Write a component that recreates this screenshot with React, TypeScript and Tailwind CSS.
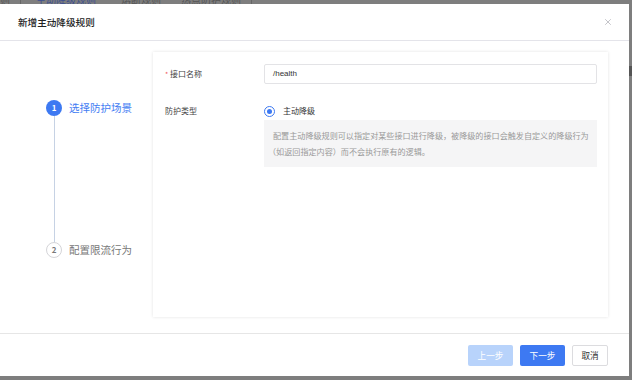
import { X } from 'lucide-react';

const font = { fontFamily: '"Noto Sans CJK SC", "Liberation Sans", sans-serif' };

const Steps = () => {
  return (
    <div className="w-[153px] shrink-0 pl-[46px] pt-[48px] flex flex-col">
      <div className="flex items-center gap-[7px]">
        <div className="w-4 h-4 rounded-full bg-[#3d79f2] text-white text-[8px] font-bold flex items-center justify-center">1</div>
        <span className="text-[10.5px] leading-none text-[#3f7cf3]">选择防护场景</span>
      </div>
      <div className="ml-[7.5px] w-px h-[126px] bg-[#c6d2e4]" />
      <div className="flex items-center gap-[7px]">
        <div className="w-4 h-4 rounded-full bg-white border border-[#d4d4d8] text-[#777] text-[8px] font-bold flex items-center justify-center">2</div>
        <span className="text-[10.5px] leading-none text-[#777]">配置限流行为</span>
      </div>
    </div>
  );
};

const FormCard = () => {
  return (
    <div className="flex-1 min-w-0 bg-white shadow-[0_0_3px_rgba(0,0,0,0.12)] pt-[12px] pl-[12px] pr-[11px]">
      {/* 接口名称 */}
      <div className="flex items-center h-[20px]">
        <div className="w-[99px] shrink-0 flex items-center text-[8px] text-[#444]">
          <span className="w-[5px] text-[#f05a5a] text-[7px]">*</span>
          <span>接口名称</span>
        </div>
        <div className="flex-1 h-[20px] border border-[#e3e3e6] rounded-[2px] flex items-center px-[8px] text-[8px] text-[#333]" style={{ fontFamily: '"Liberation Sans", sans-serif' }}>
          /health
        </div>
      </div>

      {/* 防护类型 */}
      <div className="flex mt-[20px]">
        <div className="w-[99px] shrink-0 h-[14px] flex items-center text-[8px] text-[#444]">防护类型</div>
        <div className="flex-1 min-w-0">
          <div className="h-[14px] flex items-center">
            <div className="w-[11px] h-[11px] rounded-full border border-[#3d79f2] flex items-center justify-center">
              <div className="w-[5px] h-[5px] rounded-full bg-[#3d79f2]" />
            </div>
            <span className="ml-[8px] text-[8px] text-[#333]">主动降级</span>
          </div>
          <div className="mt-[2px] h-[47px] bg-[#f5f5f6] pt-[8px] pl-[9px] text-[8.1px] leading-[16px] text-[#999] whitespace-nowrap overflow-hidden">
            配置主动降级规则可以指定对某些接口进行降级，被降级的接口会触发自定义的降级行为
            <br />
            <span className="ml-[-5px]">（如返回指定内容）而不会执行原有的逻辑。</span>
          </div>
        </div>
      </div>
    </div>
  );
};

export default function App() {
  return (
    <div className="relative w-[632px] h-[380px] overflow-hidden bg-[#7e7e7e]" style={font}>
      {/* page behind the mask */}
      <div className="flex items-end h-[4px] overflow-hidden text-[10px] leading-none text-[#555]">
        <div className="flex items-center h-[12px] -mb-[2px]">
          <span className="w-[20px]">则</span>
          <span className="w-px h-[12px] bg-[#666]" />
          <span className="ml-[15px] text-[#3d4f8f]">主动降级规则</span>
          <span className="ml-[25px]">熔断规则</span>
          <span className="ml-[20px]">热点防护规则</span>
          <span className="ml-[10px] w-px h-[12px] bg-[#666]" />
        </div>
      </div>
      <div className="absolute right-0 top-[66px] w-[3px] h-[10px] bg-[#555]" />

      {/* modal */}
      <div className="absolute left-0 top-[4px] w-[629px] h-[372px] bg-white flex flex-col">
        <div className="h-[37px] shrink-0 border-b border-[#e4e4ea] px-[18px] flex items-center justify-between">
          <span className="text-[9.6px] font-medium text-[#222]">新增主动降级规则</span>
          <X size={10} strokeWidth={1.4} className="text-[#9a9aa2] mr-[-2px]" />
        </div>

        <div className="flex-1 flex pt-[11px] pr-[21px] pb-[16px]">
          <Steps />
          <FormCard />
        </div>

        <div className="h-[43px] shrink-0 border-t border-[#e6e6e6] flex justify-end items-start pt-[11px] pr-[21px] gap-[7px] text-[8.6px]">
          <button className="w-[45px] h-[21px] rounded-[2px] bg-[#b8d3fb] text-white">上一步</button>
          <button className="w-[45px] h-[21px] rounded-[2px] bg-[#3d79f2] text-white">下一步</button>
          <button className="w-[36px] h-[21px] rounded-[2px] bg-white border border-[#dcdcdf] text-[#333]">取消</button>
        </div>
      </div>
    </div>
  );
}
